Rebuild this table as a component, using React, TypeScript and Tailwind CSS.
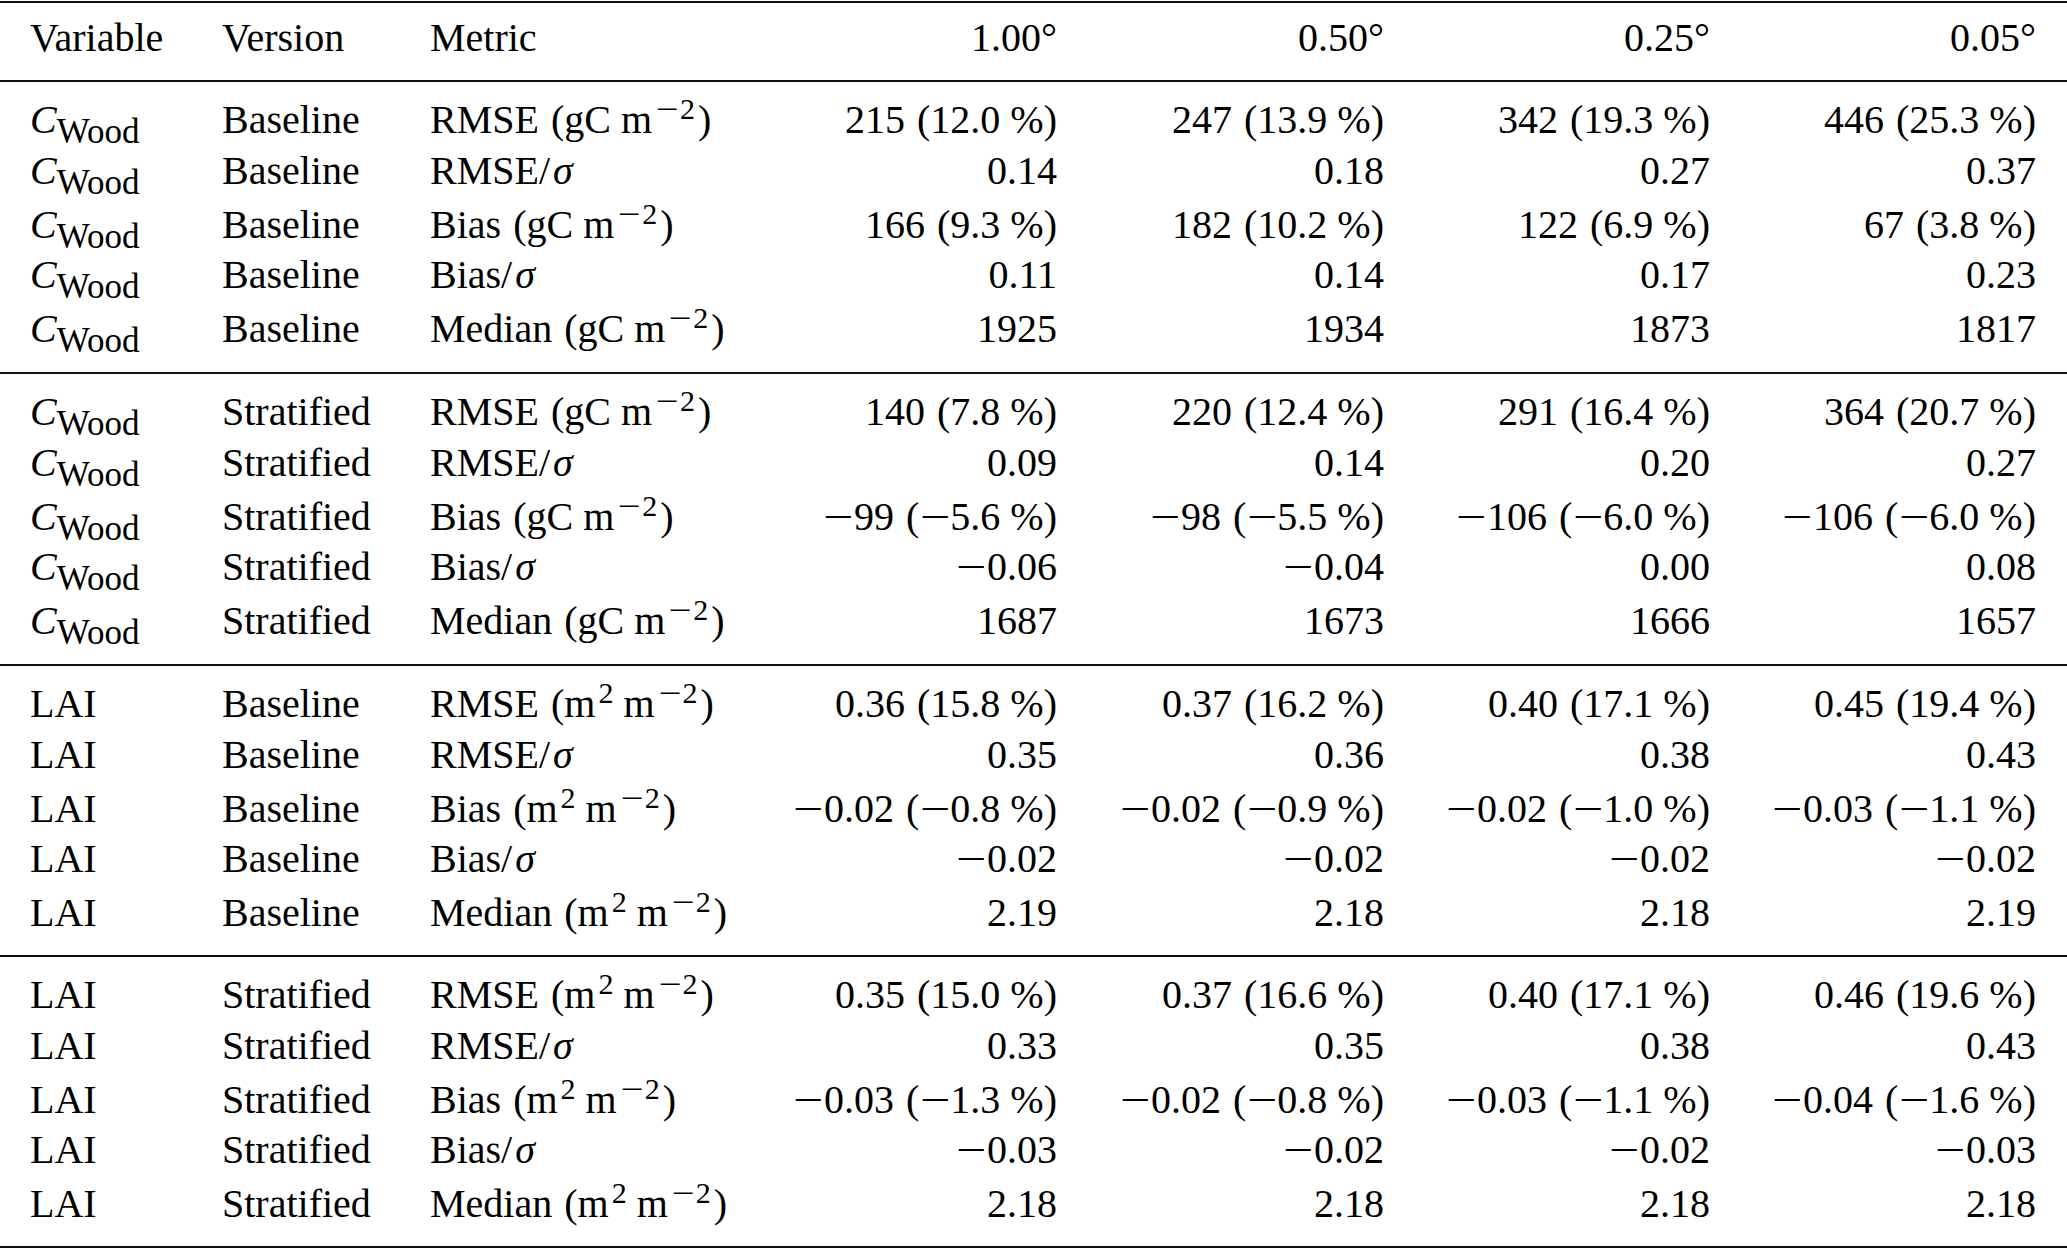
import React from "react";

type Unit = "gc" | "m2";

const COLS =
  "grid grid-cols-[192px_208px_300px_327px_327px_326px_326px] pl-[30px] whitespace-nowrap";

const ROW_H = ["h-[51px]", "h-[54px]", "h-[50px]", "h-[54px]", "h-[50px]"];
const GROUP_H = ["h-[290px]", "h-[290px]", "h-[289px]", "h-[289px]"];

function Minus() {
  return (
    <span className="inline-block w-[31px] text-center">
      <span className="inline-block scale-x-[1.35]">{"\u2212"}</span>
    </span>
  );
}

function SupMinus() {
  return (
    <span className="inline-block w-[25px] text-center">
      <span className="inline-block scale-x-[1.35]">{"\u2212"}</span>
    </span>
  );
}

function Space() {
  return <span className="inline-block w-[12px]" />;
}

function Thin() {
  return <span className="inline-block w-[10px]" />;
}

function Num({ s }: { s: string }) {
  const out: React.ReactNode[] = [];
  let buf = "";
  let k = 0;
  const flush = () => {
    if (buf) {
      out.push(<React.Fragment key={k++}>{buf}</React.Fragment>);
      buf = "";
    }
  };
  for (const ch of s) {
    if (ch === "\u2212") {
      flush();
      out.push(<Minus key={k++} />);
    } else if (ch === " ") {
      flush();
      out.push(<Space key={k++} />);
    } else if (ch === "\u2009") {
      flush();
      out.push(<Thin key={k++} />);
    } else {
      buf += ch;
    }
  }
  flush();
  return <>{out}</>;
}

function Sup({ children }: { children: React.ReactNode }) {
  return (
    <span className="relative -top-[14px] ml-[3px] text-[30px] leading-none">{children}</span>
  );
}

function UnitText({ unit }: { unit: Unit }) {
  if (unit === "gc") {
    return (
      <>
        (gC<span className="inline-block w-[10px]" />m
        <Sup>
          <SupMinus />2
        </Sup>
        <span className="ml-[3px]">)</span>
      </>
    );
  }
  return (
    <>
      (m<Sup>2</Sup>
      <span className="inline-block w-[10px]" />m
      <Sup>
        <SupMinus />2
      </Sup>
      <span className="ml-[3px]">)</span>
    </>
  );
}

function Variable({ v }: { v: "wood" | "lai" }) {
  if (v === "lai") return <span>LAI</span>;
  return (
    <span>
      <i>C</i>
      <span className="relative top-[10px] text-[35px] leading-none">Wood</span>
    </span>
  );
}

function Metric({ m, unit }: { m: string; unit: Unit }) {
  if (m === "RMSE/s" || m === "Bias/s") {
    return (
      <span>
        {m.slice(0, -1)}
        <i className="pl-[3px] pr-[4px]">σ</i>
      </span>
    );
  }
  return (
    <span>
      {m}
      <Space />
      <UnitText unit={unit} />
    </span>
  );
}

const M = ["RMSE", "RMSE/s", "Bias", "Bias/s", "Median"];

const groups: {
  v: "wood" | "lai";
  ver: string;
  unit: Unit;
  vals: string[][];
}[] = [
  {
    v: "wood",
    ver: "Baseline",
    unit: "gc",
    vals: [
      ["215 (12.0\u2009%)", "247 (13.9\u2009%)", "342 (19.3\u2009%)", "446 (25.3\u2009%)"],
      ["0.14", "0.18", "0.27", "0.37"],
      ["166 (9.3\u2009%)", "182 (10.2\u2009%)", "122 (6.9\u2009%)", "67 (3.8\u2009%)"],
      ["0.11", "0.14", "0.17", "0.23"],
      ["1925", "1934", "1873", "1817"],
    ],
  },
  {
    v: "wood",
    ver: "Stratified",
    unit: "gc",
    vals: [
      ["140 (7.8\u2009%)", "220 (12.4\u2009%)", "291 (16.4\u2009%)", "364 (20.7\u2009%)"],
      ["0.09", "0.14", "0.20", "0.27"],
      [
        "\u221299 (\u22125.6\u2009%)",
        "\u221298 (\u22125.5\u2009%)",
        "\u2212106 (\u22126.0\u2009%)",
        "\u2212106 (\u22126.0\u2009%)",
      ],
      ["\u22120.06", "\u22120.04", "0.00", "0.08"],
      ["1687", "1673", "1666", "1657"],
    ],
  },
  {
    v: "lai",
    ver: "Baseline",
    unit: "m2",
    vals: [
      ["0.36 (15.8\u2009%)", "0.37 (16.2\u2009%)", "0.40 (17.1\u2009%)", "0.45 (19.4\u2009%)"],
      ["0.35", "0.36", "0.38", "0.43"],
      [
        "\u22120.02 (\u22120.8\u2009%)",
        "\u22120.02 (\u22120.9\u2009%)",
        "\u22120.02 (\u22121.0\u2009%)",
        "\u22120.03 (\u22121.1\u2009%)",
      ],
      ["\u22120.02", "\u22120.02", "\u22120.02", "\u22120.02"],
      ["2.19", "2.18", "2.18", "2.19"],
    ],
  },
  {
    v: "lai",
    ver: "Stratified",
    unit: "m2",
    vals: [
      ["0.35 (15.0\u2009%)", "0.37 (16.6\u2009%)", "0.40 (17.1\u2009%)", "0.46 (19.6\u2009%)"],
      ["0.33", "0.35", "0.38", "0.43"],
      [
        "\u22120.03 (\u22121.3\u2009%)",
        "\u22120.02 (\u22120.8\u2009%)",
        "\u22120.03 (\u22121.1\u2009%)",
        "\u22120.04 (\u22121.6\u2009%)",
      ],
      ["\u22120.03", "\u22120.02", "\u22120.02", "\u22120.03"],
      ["2.18", "2.18", "2.18", "2.18"],
    ],
  },
];

function Rule() {
  return <div className="h-[2px] bg-[#111]" />;
}

export default function App() {
  return (
    <div className="w-[2067px] h-[1250px] bg-white text-black font-['Liberation_Serif','Times_New_Roman',serif] text-[40px] leading-[50px] pt-px">
      <Rule />
      <div className={`${COLS} h-[77px] pt-[10px]`}>
        <div>Variable</div>
        <div>Version</div>
        <div>Metric</div>
        <div className="text-right">1.00°</div>
        <div className="text-right">0.50°</div>
        <div className="text-right">0.25°</div>
        <div className="text-right">0.05°</div>
      </div>
      {groups.map((g, gi) => (
        <div key={gi}>
          <Rule />
          <div className={`${GROUP_H[gi]} pt-[13px] flex flex-col`}>
            {M.map((m, ri) => (
              <div key={ri} className={`${COLS} ${ROW_H[ri]}`}>
                <div>
                  <Variable v={g.v} />
                </div>
                <div>{g.ver}</div>
                <div>
                  <Metric m={m} unit={g.unit} />
                </div>
                {g.vals[ri].map((val, ci) => (
                  <div key={ci} className="text-right">
                    <Num s={val} />
                  </div>
                ))}
              </div>
            ))}
          </div>
        </div>
      ))}
      <Rule />
    </div>
  );
}
